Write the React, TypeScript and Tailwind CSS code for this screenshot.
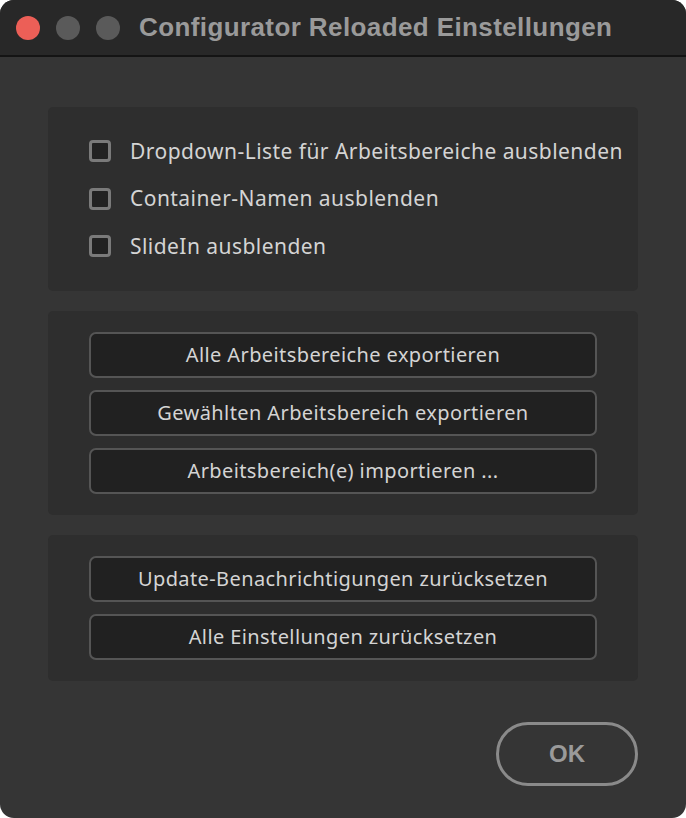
import React from "react";

/* ---------------------------- checkbox row ---------------------------- */
const CheckRow = ({ label }: { label: string }) => (
  <label className="flex items-center gap-[19px] h-[47.5px]">
    <span className="w-[22px] h-[22px] rounded-[4px] border-[3px] border-[#7a7a7a] bg-[#222222]" />
    <span>{label}</span>
  </label>
);

const PanelButton = ({ label }: { label: string }) => (
  <button className="w-full h-[46px] rounded-[7px] border-2 border-[#555555] bg-[#212121] text-[20px] text-[#d4d4d4] tracking-[0.4px]">
    {label}
  </button>
);

export default function App() {
  return (
    <div className="w-[686px] h-[818px] bg-white">
      <div
        className="w-full h-full rounded-[14px] overflow-hidden bg-[#353535] flex flex-col"
        style={{ fontFamily: '"Noto Sans", "Open Sans", sans-serif' }}
      >
        {/* TITLE BAR */}
        <div className="h-[57px] shrink-0 bg-[#282828] border-b-2 border-[#141414] flex items-center pl-[16px]">
          <div className="flex gap-[16px]">
            <span className="w-[24px] h-[24px] rounded-full bg-[#ec5f57]" />
            <span className="w-[24px] h-[24px] rounded-full bg-[#5a5a5a]" />
            <span className="w-[24px] h-[24px] rounded-full bg-[#5a5a5a]" />
          </div>
          <h1
            className="ml-[19px] text-[26px] font-bold text-[#9a9a9a] tracking-[0.4px]"
            style={{ fontFamily: '"Liberation Sans", Arial, sans-serif' }}
          >
            Configurator Reloaded Einstellungen
          </h1>
        </div>

        {/* BODY */}
        <div className="flex flex-col px-[48px] pt-[50px] text-[21px] text-[#d4d4d4]">
          <div className="bg-[#2e2e2e] rounded-[5px] pl-[41px] pt-[20.5px] h-[184px] tracking-[0.45px]">
            <CheckRow label="Dropdown-Liste für Arbeitsbereiche ausblenden" />
            <CheckRow label="Container-Namen ausblenden" />
            <CheckRow label="SlideIn ausblenden" />
          </div>

          <div className="mt-[20px] bg-[#2e2e2e] rounded-[5px] px-[41px] py-[21px] flex flex-col gap-[12px]">
            <PanelButton label="Alle Arbeitsbereiche exportieren" />
            <PanelButton label="Gewählten Arbeitsbereich exportieren" />
            <PanelButton label="Arbeitsbereich(e) importieren ..." />
          </div>

          <div className="mt-[20px] bg-[#2e2e2e] rounded-[5px] px-[41px] py-[21px] flex flex-col gap-[12px]">
            <PanelButton label="Update-Benachrichtigungen zurücksetzen" />
            <PanelButton label="Alle Einstellungen zurücksetzen" />
          </div>

          <div className="flex justify-end mt-[41px]">
            <button
              className="w-[142px] h-[64px] rounded-full border-[3px] border-[#8a8a8a] text-[24px] font-bold text-[#9a9a9a]"
              style={{ fontFamily: '"Liberation Sans", Arial, sans-serif' }}
            >
              OK
            </button>
          </div>
        </div>
      </div>
    </div>
  );
}
